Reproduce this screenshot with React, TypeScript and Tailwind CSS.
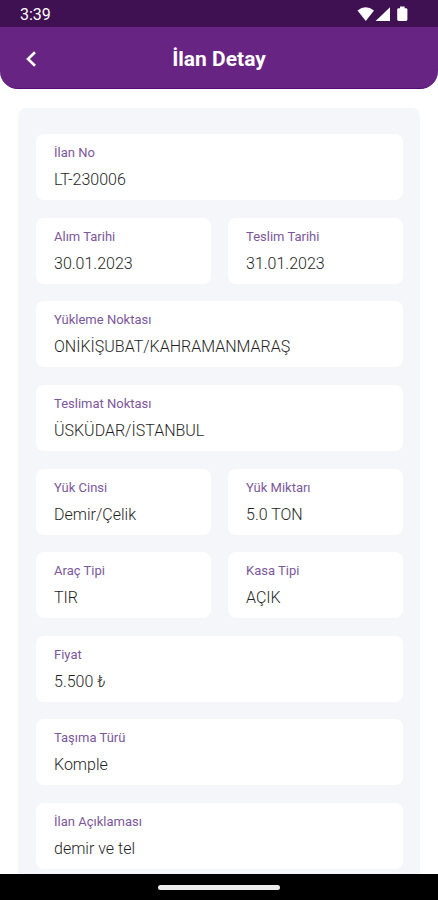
import React from "react";

interface Field {
  label: string;
  value: string;
  half?: boolean;
}

interface FieldCardProps {
  field: Field;
}

const fields: Field[] = [
  { label: "İlan No", value: "LT-230006" },
  { label: "Alım Tarihi", value: "30.01.2023", half: true },
  { label: "Teslim Tarihi", value: "31.01.2023", half: true },
  { label: "Yükleme Noktası", value: "ONİKİŞUBAT/KAHRAMANMARAŞ" },
  { label: "Teslimat Noktası", value: "ÜSKÜDAR/İSTANBUL" },
  { label: "Yük Cinsi", value: "Demir/Çelik", half: true },
  { label: "Yük Miktarı", value: "5.0 TON", half: true },
  { label: "Araç Tipi", value: "TIR", half: true },
  { label: "Kasa Tipi", value: "AÇIK", half: true },
  { label: "Fiyat", value: "5.500 ₺" },
  { label: "Taşıma Türü", value: "Komple" },
  { label: "İlan Açıklaması", value: "demir ve tel" },
];

const StatusBar: React.FC = () => (
  <div className="flex h-[27px] items-center justify-between bg-[#3f1052] pl-5 pr-[29px] text-white">
    <span className="pt-[2px] text-base">3:39</span>
    <svg width="52" height="16" viewBox="0 0 52 16" fill="currentColor" aria-hidden="true">
      <path d="M0.500 4.500Q8.500 -2.200 17 4.500L8.800 15Z" />
      <path d="M33 1.200V15H18.600Z" />
      <path d="M43 0.600h4.600v1.600H49q1.400 0 1.400 1.400v10q0 1.400-1.400 1.400h-7.400q-1.400 0-1.400-1.400V3.600Q40.200 2.200 41.600 2.200H43Z" />
    </svg>
  </div>
);

const Header: React.FC = () => (
  <header className="grid h-[62px] grid-cols-[62px_1fr_62px] items-center rounded-b-[18px] border-b border-[#560a77] bg-[#672483] pt-[3px] text-white">
    <button type="button" aria-label="Geri" className="flex h-full items-center justify-center">
      <svg width="12" height="18" viewBox="0 0 12 18" fill="none" stroke="currentColor" strokeWidth="2.6" aria-hidden="true">
        <path d="M10 2.200L3 9l7 6.800" />
      </svg>
    </button>
    <h1 className="pt-[2px] text-center text-[21px] font-bold">İlan Detay</h1>
  </header>
);

const FieldCard: React.FC<FieldCardProps> = ({ field }) => (
  <div className={`rounded-lg bg-white px-[18px] pb-2 pt-[10px] ${field.half ? "" : "col-span-2"}`}>
    <dt className="text-[13px] leading-[18px] text-[#7c589b]">{field.label}</dt>
    <dd className="mt-[6px] text-base font-light leading-6 text-[#1f1f1f]">{field.value}</dd>
  </div>
);

const App: React.FC = () => (
  <div className="flex min-h-screen flex-col bg-white font-['Roboto','Noto_Sans',sans-serif]">
    <div>
      <StatusBar />
      <Header />
    </div>
    <main className="flex grow flex-col px-[18px] pt-[19px]">
      <dl className="grid grow grid-cols-2 content-between gap-x-[17px] rounded-t-lg bg-[#f4f6fa] pb-[5px] pl-[18px] pr-[17px] pt-[26px]">
        {fields.map((field) => (
          <FieldCard key={field.label} field={field} />
        ))}
      </dl>
    </main>
    <div className="flex h-[26px] items-center justify-center bg-black">
      <div className="h-[5px] w-[122px] rounded-full bg-[#ececec]"></div>
    </div>
  </div>
);

export default App;
